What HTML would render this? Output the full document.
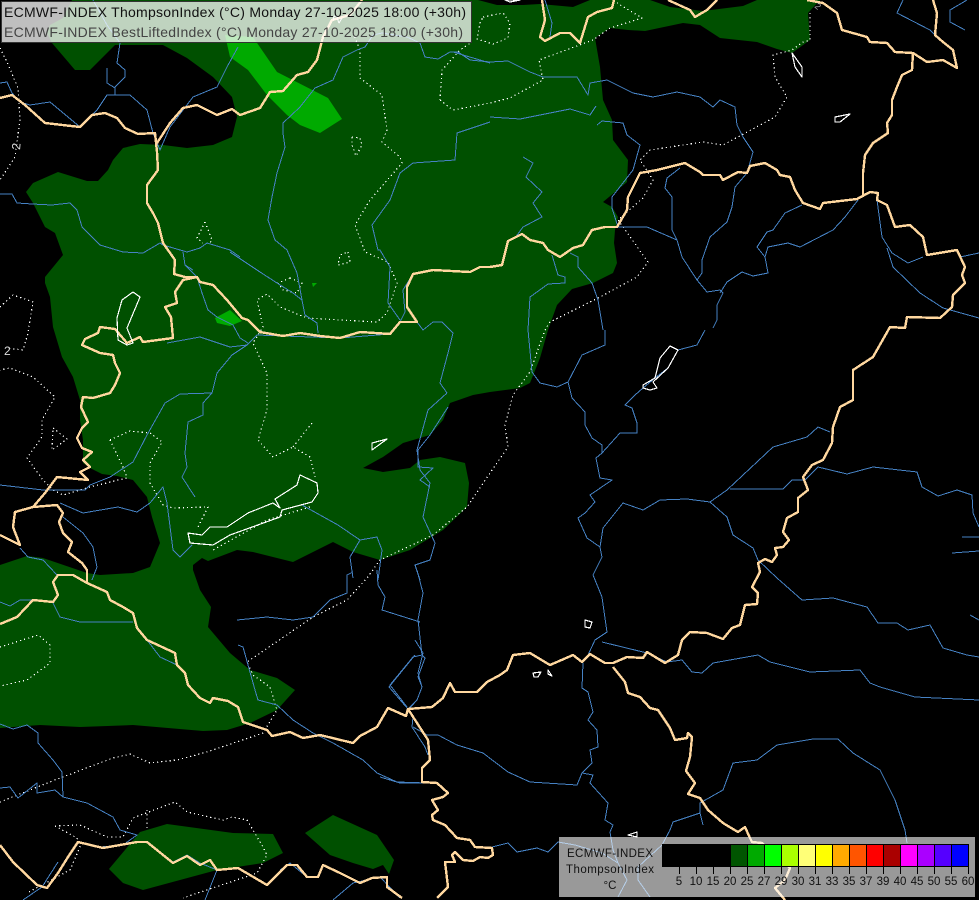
<!DOCTYPE html>
<html lang="en"><head><meta charset="utf-8"><title>ECMWF-INDEX ThompsonIndex</title>
<style>
html,body{margin:0;padding:0;background:#000;width:979px;height:900px;overflow:hidden}
svg{display:block;font-family:"Liberation Sans",sans-serif}
.r,.b,.d,.l{fill:none;stroke-linejoin:round}
.r{stroke:#4682c4;stroke-width:1}
.b{stroke:#ffd79f;stroke-width:2.4}
.d{stroke:#fff;stroke-width:1.2;stroke-dasharray:1.2 3}
.l{stroke:#fff;stroke-width:1.2}
</style></head><body>
<svg width="979" height="900" viewBox="0 0 979 900" xmlns="http://www.w3.org/2000/svg">
<rect width="979" height="900" fill="#000"/>
<g fill="#005000">
<path d="M72,0L63,18L50,25L47,33L52,43L75,70L90,70L115,45L130,45L163,45L187,58L213,77L232,97L237,117L232,137L213,145L187,148L163,145L140,144L123,148L113,160L108,170L98,181L87,181L58,172L33,183L26,192L33,203L45,227L55,233L63,255L45,277L45,283L50,297L53,327L62,357L73,377L80,400L80,420L83,440L83,463L90,468L102,474L117,476L133,480L147,497L152,517L160,543L150,567L133,573L100,575L87,573L43,558L27,556L0,565L0,728L40,725L80,727L133,725L203,731L227,730L250,723L277,710L295,690L277,678L250,670L230,653L208,627L211,607L200,590L193,570L193,565L202,558L208,561L237,550L253,552L293,562L333,542L353,552L380,560L410,550L443,530L467,507L469,483L465,463L440,457L420,460L410,468L383,472L363,468L383,457L403,443L430,435L443,420L450,403L473,395L490,392L520,388L530,383L540,358L548,330L557,305L572,289L593,283L613,273L617,263L614,243L615,230L618,217L612,207L603,202L627,182L628,160L613,140L612,120L603,100L600,67L595,38L610,28L628,30L645,31L683,23L700,25L720,38L757,42L777,49L792,53L810,40L808,13L820,0L757,0L743,6L703,11L670,7L650,0L590,0L573,7L540,4L523,5L497,5L478,0Z"/>
<path d="M109,869L140,832L167,824L233,833L273,834L283,853L263,863L217,870L143,890L123,883Z"/>
<path d="M305,833L333,815L377,835L394,860L389,874L383,865L373,869L353,863L330,855Z"/>
</g>
<g fill="#00aa00">
<path d="M225,35L253,37L277,72L328,98L342,119L320,133L300,125L287,115L267,95L248,70L230,57Z"/>
<path d="M215,318L230,310L242,321L230,326L217,323Z"/>
<path d="M312,283L317,283L313,287Z"/>
</g>
<g shape-rendering="crispEdges">
<path class="d" d="M0,48L7,62L18,88L20,120L15,157L0,180M353,33L360,50L360,78L382,95L387,130L382,142L400,157L402,163L370,200L355,225L365,252L388,262L397,283L387,313L377,322L340,320L307,318L280,307L267,294L257,300L263,327L253,343L267,373L267,410L258,440L273,457L293,447L310,457L315,477M293,447L312,423M310,507L267,520L213,550M110,440L130,431L150,433L162,442L150,463L150,483L163,505L173,508L208,507L198,527M110,440L123,467L127,478L90,487L63,495L53,490L43,480L27,458L42,437L42,420L55,397L33,377L10,368L0,370M0,307L13,295L33,302L28,333L23,350L7,348M53,428L67,439L52,450Z M348,252L350,262L338,265L340,255Z M290,278L302,283L297,293L283,290L278,283Z M352,137L360,138L362,145L356,156L352,145Z M205,222L197,238L203,243M205,222L212,240L210,243M440,100L442,70L460,50L472,42M483,17L503,13L510,23L508,38L493,44L477,39L480,23Z M440,100L453,110L490,103L510,98L543,80L539,60L593,40L610,28L642,18L617,3M810,13L810,40L803,42L792,50L773,55L775,77L787,97L775,117L723,145L703,142L650,150L640,160L653,180L643,198L618,220L648,262L637,277L600,297L550,322L545,330L530,372L513,395L505,425L508,447L490,473L467,507L433,535L380,560L367,578L347,600L313,617L247,662L253,675L270,687L277,710L263,733L207,752L177,760L150,763L130,754L113,758L60,778L0,802M0,647L38,635L50,645L50,663L27,680L0,686M55,826L80,825L107,837L123,837L133,818L175,802L187,812L223,820L232,817L247,820L263,847L267,855L257,873L183,898M147,810L147,830M55,826L77,838L80,847L70,870L27,893"/>
<path class="r" d="M0,83L7,82L12,93L20,102L30,105L50,102L80,127L97,110L107,95L130,95L147,110L153,133L160,150L170,127L193,97L217,87L227,67L238,47M115,95L115,87L125,77L125,70L117,63L120,43L107,25L93,0M107,68L107,83L115,88M283,133L283,123L300,107L315,88L333,80L343,57L357,50L365,47L373,35L382,33L407,37L420,43L425,57L438,59L450,52L458,52L470,60L490,62L508,61L530,72L543,77L577,77L588,95L590,83L607,80L633,93L653,97L677,92L700,97L713,107L720,100L735,107L737,125L743,137L753,152L747,173L735,187L732,207L727,222L710,237L702,260L702,273L697,280L707,292L720,290L723,293L717,305L717,320L713,328M283,133L285,147L277,173L272,197L268,220L275,240L287,250L297,273L302,300L305,315L317,323L318,333M490,122L457,133L455,160L413,163L400,173L390,200L372,225L378,250L380,250L390,267L388,303L400,320M490,63L453,52M0,194L12,194L17,203L32,204L52,205L70,203L77,210L82,227L100,245L123,252L143,253L160,243L163,245L187,252L200,248L207,243L230,250L240,257M183,252L185,265L193,270M490,117L520,119L570,109L590,115L596,106M597,125L602,121L623,123L627,135L640,145L633,170L612,197L612,208L618,227L647,227L677,240M618,227L612,208M523,157L533,163L526,177L542,192L533,203L542,217L523,227L515,238M680,168L667,178L665,188L672,197L672,230L677,240L682,257L697,280M552,255L558,275L565,277L565,283L548,284L530,297L528,330L532,372L540,383L557,387L568,382L582,355L605,345L605,330M570,253L578,257L578,267L592,283L598,300L603,330M802,205L785,213L773,230L767,232L757,247L765,257L768,273L753,276L742,272L727,282L720,293M858,200L845,217L833,230L800,247L788,243L768,247L765,257M877,200L882,237L892,253L908,263L923,257M887,248L893,267L920,293L943,308L979,318M960,257L979,253M903,0L897,13L930,30L935,35L953,50L957,68M967,0L950,10L950,22L965,30M545,0L552,23L550,37M568,382L572,398L585,412L585,425L592,438L602,445L602,453L596,458L600,478L612,480L590,495L595,502L585,513L578,518L587,538L600,547L602,557L593,575L602,597L607,632L595,640L588,655M602,453L620,433L637,433L637,423L632,408L625,405L635,395L643,388L655,378L668,368L678,350L697,345L705,330M710,502L687,499L660,500L643,510L623,503L603,528L600,547M710,502L727,490L773,447L807,437L818,427L830,432M730,489L783,489L792,480L805,480L818,467L847,474L873,467L917,472L922,487L938,496L957,490L972,495L973,513L979,527M710,502L727,517L733,535L753,548L758,560L777,578L802,600L833,598L867,607L878,623L897,623L908,630L930,625L943,648L967,655L979,657M962,537L979,537M952,553L979,551M970,615L979,620M602,642L647,653L667,662L682,660L692,672L702,673L713,663L758,655L770,662L810,672L860,670L870,683L880,687L915,697L979,700M777,745L757,760L733,763L723,790L700,803L700,813L673,822L670,830L662,845L638,867L638,880L650,897M777,745L813,739L838,739L853,753L880,770L895,800L905,830L907,843M583,663L582,688L588,692L593,712L588,720L597,730L598,747L590,750L592,763L582,773L593,775L590,783L608,803L605,820L613,825L610,832M700,813L703,825M582,773L577,785L530,782L508,772L483,753L457,745L438,735L427,735L413,727M380,777L400,783L423,783M415,640L423,653L418,673L422,687L417,700L408,709M415,655L389,687L408,709M413,717L412,727L425,747L428,755M167,343L200,337L230,347L247,345L257,335L283,336L340,338L390,334L400,322L405,312L403,290L413,274M247,345L232,355L217,373L212,393L180,394L165,403L147,435L133,462L110,477L90,485L85,490L43,490L0,485M212,393L203,403L203,415L188,422L185,453L187,467L182,477L195,497M150,503L163,487L167,503L173,550L180,557L192,545M150,503L137,512L118,507L83,513L60,503M302,505L338,525L360,540L350,557L353,578M360,540L377,537L382,550L378,580M447,393L428,410L417,450L420,470L430,483L423,517L435,543L430,560L415,565L420,580M447,393L440,383L448,353L453,333L442,322L433,322L423,330L417,322M448,407L430,435L418,450L418,467L433,468L420,480L430,487M63,517L83,533L93,547L97,567L92,580M20,548L28,557L43,560L57,575M183,252L185,265L197,277L202,293L208,310L217,317L233,325L240,338L248,343M230,252L260,272L277,283L293,293L302,300M0,602L10,606L20,600L33,600M53,603L60,617L80,622L107,622L133,622M147,640L160,657L177,665M237,620L267,617L293,620L313,617L330,600L347,593L347,575L353,572M377,570L378,585L385,597L382,610L420,622M417,570L423,593L418,620L422,655L413,657L390,685L407,707M422,655L425,658L418,677L422,687L417,700L408,710M238,645L243,647L255,690L258,700L277,705L293,720L313,733L333,743L363,760L377,773L397,782L427,783M0,724L13,729L27,725L38,733L38,743L53,760L62,772L63,797L87,803L113,817L120,830L137,835L123,845L100,847L80,842M0,788L10,787L18,798L37,783L37,793L55,790L63,797M58,862L42,887L23,900M148,843L173,862L187,855L200,863L217,870L205,900M280,870L290,863L307,877M333,900L353,883L380,877L400,898M492,847L508,843L517,852L537,848L548,852L558,842L575,845L602,853L618,863L627,880L618,897M610,832L613,850L618,863"/>
<path class="b" d="M0,98L12,95L25,105L45,123L80,127L92,115L105,113L117,118L125,128L138,134L155,133L157,152L158,170L147,185L147,203L153,213L158,223L163,243L175,260L174,274L185,277L197,277L200,282L213,285L227,300L242,318L248,320L260,332L283,336L300,333L320,336L340,338L360,332L390,334L400,322L417,322L407,307L407,287L413,274L433,270L470,272L480,267L490,267L502,265L508,241L522,234L530,240L543,243L548,250L560,257L573,248L583,245L592,230L605,227L617,227L627,210L628,197L640,173L657,170L685,163L700,172L703,175L720,175L723,180L738,172L747,173L750,166L765,163L777,170L780,175L790,177L795,190L803,203L820,209L823,203L857,199L870,192L878,193L877,200L887,205L895,227L910,225L923,237L927,255L957,250L965,267L962,275L965,283L953,295L952,307L940,318L907,317L905,328L890,327L873,357L853,370L853,400L840,407L833,427L832,443L823,460L812,465L803,477L808,490L798,498L798,512L787,518L783,532L789,540L783,547L775,548L777,555L772,562L765,559L758,563L760,572L752,587L758,593L757,604L745,605L740,625L732,628L723,639L707,633L690,632L682,640L678,655L665,663L647,652L643,658L627,657L613,663L605,663L590,654L582,662L573,655L550,665L530,653L513,655L507,670L500,675L487,682L477,692L455,692L450,683L443,698L432,707L408,709L406,716L388,708L377,727L360,736L353,743L320,735L303,738L290,732L272,736L267,730L243,722L238,707L228,701L213,698L210,703L200,698L188,685L185,673L177,665L175,653L147,640L137,628L133,613L123,607L110,600L107,592L87,583L73,575L58,575L53,582L58,595L53,602L33,600L17,617L0,624M87,583L87,570L82,563L68,552L72,542L63,533L59,522L63,513L57,505L33,507L15,512L13,527L20,545L0,535M33,507L45,493L57,477L88,480L80,472L90,467L83,460L92,452L82,448L77,438L82,428L88,422L81,407L83,397L93,398L110,393L115,385L120,373L115,363L113,355L100,353L82,345L85,339L98,333L100,327L115,329L127,343L140,337L143,342L173,338L171,317L165,307L177,303L175,292L183,280L197,277M157,143L170,123L183,108L197,105L217,115L232,109L240,115L260,108L270,92L283,91L297,75L308,72L317,60L323,37L332,20L350,15L362,0M542,0L545,20L540,37L545,41L560,33L570,33L580,43L588,17L597,12L612,8L614,0M668,0L690,10L695,17L707,10L717,0M807,0L823,3L837,13L842,30L867,37L870,42L887,43L895,52L913,53L927,62L943,60L957,68L953,50L943,42L935,35L937,13L933,0M913,53L912,70L902,75L897,87L892,100L892,115L887,123L888,133L873,143L865,155L863,173L863,197M408,709L428,740L430,760L422,768L422,782L437,783L448,793L443,797L432,800L438,810L432,815L433,820L445,825L457,838L470,840L475,847L492,848L493,855L488,858L480,857L473,861L463,860L455,852L452,855L455,862L445,862L448,887L437,898M613,667L625,682L628,693L640,697L650,708L658,710L670,728L675,740L687,738L688,733L692,737L690,757L686,771L695,783L688,794L700,798L708,810L723,823L738,832L745,827L750,838L752,842L762,843L790,868L785,880L775,888L785,900M0,845L13,862L37,885L47,888L58,873L68,857L78,842L103,848L137,842L147,842L173,863L187,856L200,865L210,860L217,870L238,868L267,885L287,865L297,865L307,877L318,877L323,865L340,873L360,883L372,878L387,877L387,887L402,898"/>
<path class="l" d="M188,533L202,535L210,527L227,527L248,513L273,503L280,508L275,499L297,485L300,475L317,483L318,493L312,502L282,510L280,517L230,535L213,545L190,543Z M133,292L140,297L127,328L133,343L127,345L118,340L117,318L122,300Z M372,443L387,439L372,450Z M792,53L802,67L802,77L795,67Z M835,117L850,114L840,122L835,122Z M670,346L678,350L668,368L653,382L657,388L650,390L643,388L643,385L655,378L660,358Z M585,620L592,622L590,628L585,627Z M533,673L541,672L538,677L534,677Z M548,670L552,676L548,674Z M628,835L637,832L637,837Z M510,2L520,0L505,0Z"/>
</g>
<g fill="#ddd" font-size="12">
<text x="0" y="0" transform="translate(20,150) rotate(-85)">2</text>
<text x="4" y="355">2</text>
<text x="0" y="0" transform="translate(339,24) rotate(-60)" fill="#fff">2</text>
<text x="0" y="0" transform="translate(814,7) rotate(40)" fill="#aaa" font-size="9">2</text>
</g>
<rect x="1.5" y="1.5" width="470" height="41" fill="#fff" fill-opacity=".75" stroke="#333" stroke-width="1"/>
<text x="4" y="17" font-size="14" fill="#111" textLength="462" lengthAdjust="spacing">ECMWF-INDEX ThompsonIndex (°C) Monday 27-10-2025 18:00 (+30h)</text>
<text x="4" y="37" font-size="14" fill="#444" textLength="459" lengthAdjust="spacing">ECMWF-INDEX BestLiftedIndex (°C) Monday 27-10-2025 18:00 (+30h)</text>
<rect x="559" y="837" width="416" height="60" fill="#fff" fill-opacity=".6"/>
<g shape-rendering="crispEdges" stroke="#000" stroke-width="1">
<rect x="662.5" y="844.5" width="68" height="22" fill="#000"/>
<rect x="730.5" y="844.5" width="17" height="22" fill="#005500"/>
<rect x="747.5" y="844.5" width="17" height="22" fill="#00aa00"/>
<rect x="764.5" y="844.5" width="17" height="22" fill="#00ff00"/>
<rect x="781.5" y="844.5" width="17" height="22" fill="#aaff00"/>
<rect x="798.5" y="844.5" width="17" height="22" fill="#ffff77"/>
<rect x="815.5" y="844.5" width="17" height="22" fill="#ffff00"/>
<rect x="832.5" y="844.5" width="17" height="22" fill="#ffaa00"/>
<rect x="849.5" y="844.5" width="17" height="22" fill="#ff5500"/>
<rect x="866.5" y="844.5" width="17" height="22" fill="#ff0000"/>
<rect x="883.5" y="844.5" width="17" height="22" fill="#aa0000"/>
<rect x="900.5" y="844.5" width="17" height="22" fill="#ff00ff"/>
<rect x="917.5" y="844.5" width="17" height="22" fill="#aa00ff"/>
<rect x="934.5" y="844.5" width="17" height="22" fill="#5500ff"/>
<rect x="951.5" y="844.5" width="17" height="22" fill="#0000ff"/>
<path d="M679.5,867V874M696.5,867V874M713.5,867V874M730.5,867V874M747.5,867V874M764.5,867V874M781.5,867V874M798.5,867V874M815.5,867V874M832.5,867V874M849.5,867V874M866.5,867V874M883.5,867V874M900.5,867V874M917.5,867V874M934.5,867V874M951.5,867V874M968.5,867V874" fill="none"/>
</g>
<g font-size="11.5" fill="#111" text-anchor="middle">
<text x="610" y="857" textLength="86">ECMWF-INDEX</text>
<text x="610" y="873" textLength="88">ThompsonIndex</text>
<text x="610" y="889">°C</text>
<text x="679" y="885">5</text><text x="696" y="885">10</text><text x="713" y="885">15</text><text x="730" y="885">20</text><text x="747" y="885">25</text><text x="764" y="885">27</text><text x="781" y="885">29</text><text x="798" y="885">30</text><text x="815" y="885">31</text><text x="832" y="885">33</text><text x="849" y="885">35</text><text x="866" y="885">37</text><text x="883" y="885">39</text><text x="900" y="885">40</text><text x="917" y="885">45</text><text x="934" y="885">50</text><text x="951" y="885">55</text><text x="968" y="885">60</text>
</g>
</svg>
</body></html>
